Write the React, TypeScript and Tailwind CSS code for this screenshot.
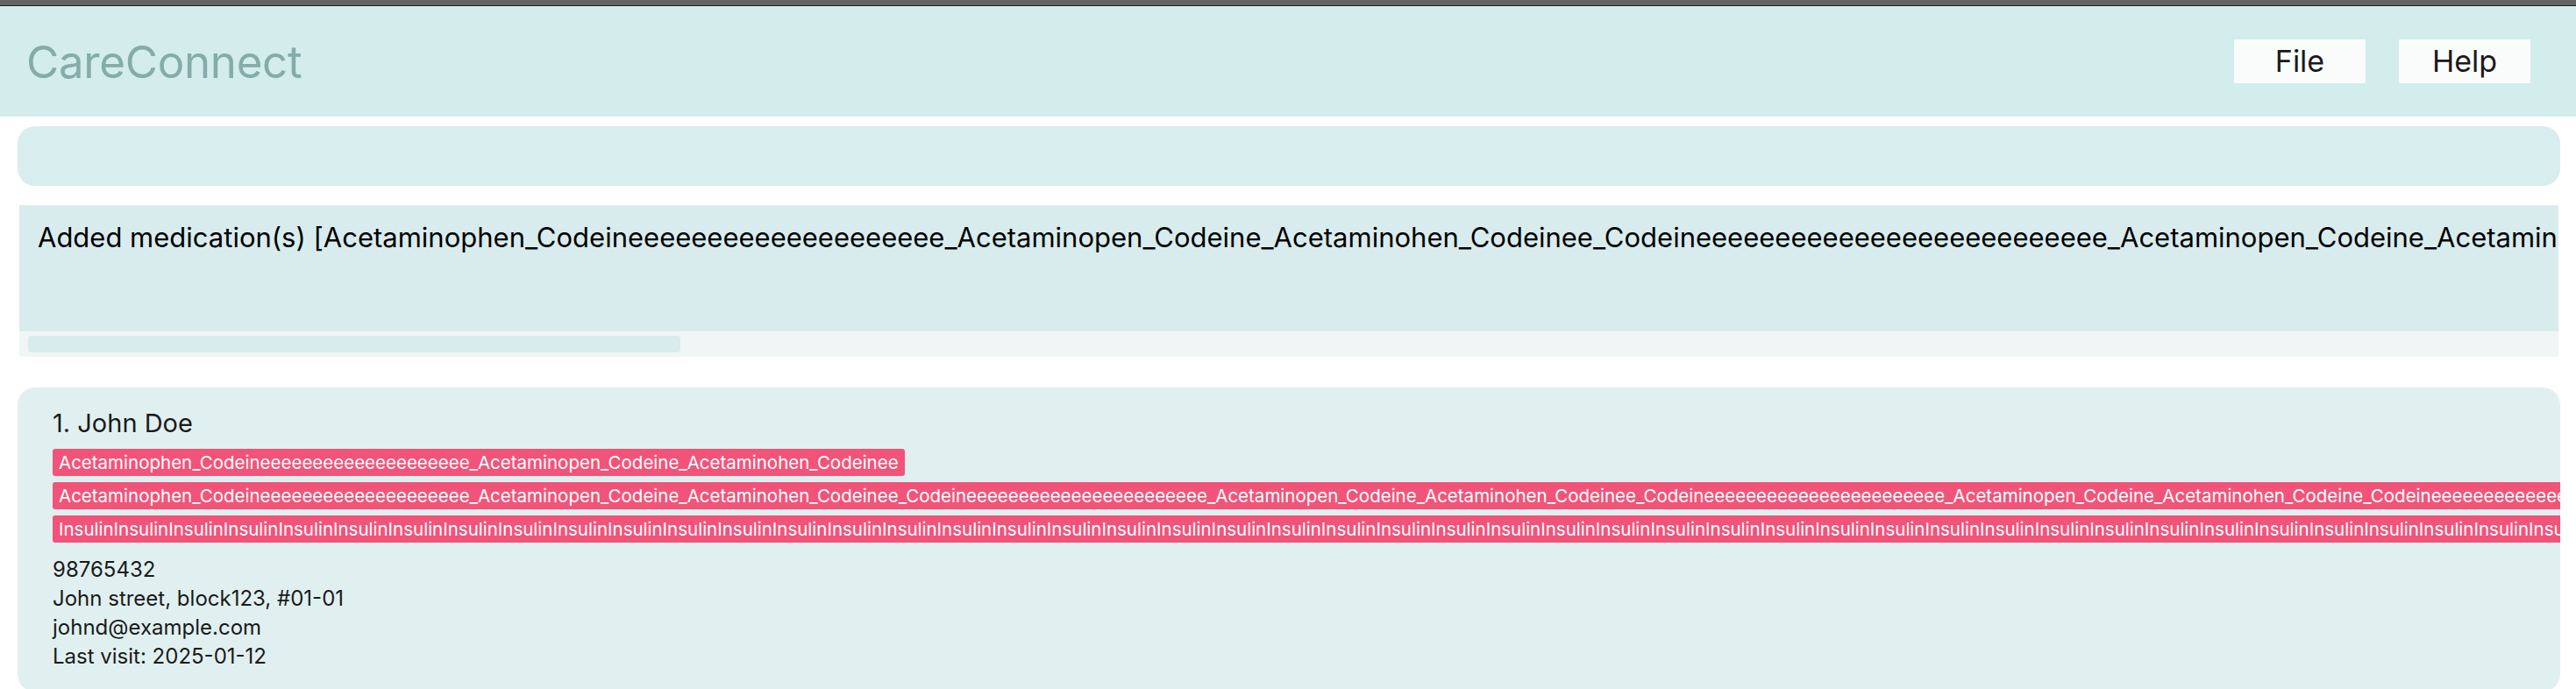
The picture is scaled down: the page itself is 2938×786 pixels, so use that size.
import React from 'react';

const FIRST = `Acetaminophen_Codeine${'e'.repeat(19)}_Acetaminopen_Codeine_Acetaminohen_Codeinee`;

function nextSeg(count: number): string {
  return `_Codeine${'e'.repeat(count)}_Acetaminopen_Codeine_Acetaminohen_Codeinee`;
}

const TAGS: string[] = [
  FIRST,
  `${FIRST}${nextSeg(22)}_Codeine${'e'.repeat(22)}_Acetaminopen_Codeine_Acetaminohen_Codeine_Codeine${'e'.repeat(25)}${nextSeg(22)}`,
  'Insulin'.repeat(120),
];

const RESULT = `Added medication(s) [${FIRST}${nextSeg(25)}${nextSeg(25)}${nextSeg(25)}]`;

function Header() {
  return (
    <div className="flex h-[126px] items-center justify-between bg-[#d3ecec] pl-[30px] pr-[52px]">
      <h1 className="text-[51px] leading-none tracking-[-0.3px] text-[#85abab]">CareConnect</h1>
      <div className="flex gap-[38px]">
        <button className="h-[50px] w-[150px] bg-[#fafcfc] text-[34px] leading-none text-[#1a1a1a]">File</button>
        <button className="h-[50px] w-[150px] bg-[#fafcfc] text-[34px] leading-none text-[#1a1a1a]">Help</button>
      </div>
    </div>
  );
}

function PersonCard() {
  return (
    <div className="ml-[20px] mr-[18px] mt-[35px] overflow-hidden rounded-[20px] bg-[#e0f0f0] pb-[24px] pl-[40px] pt-[24px]">
      <div className="text-[29px] leading-[34px] text-[#1a1a1a]">1. John Doe</div>
      <div className="mt-[12px] flex flex-col items-start gap-[7px]">
        {TAGS.map((tag, i) => (
          <span
            key={i}
            className="h-[31px] whitespace-nowrap rounded-[3px] bg-[#f25479] px-[7px] text-[20.5px] leading-[31px] text-white"
          >
            {tag}
          </span>
        ))}
      </div>
      <div className="mt-[14px] text-[24px] leading-[33px] text-[#1a1a1a]">
        <div>98765432</div>
        <div>John street, block123, #01-01</div>
        <div>johnd@example.com</div>
        <div>Last visit: 2025-01-12</div>
      </div>
    </div>
  );
}

export default function App() {
  return (
    <div className="min-h-screen bg-white font-['Inter',sans-serif]">
      <div className="h-[7px] border-b border-[#1e1e1e] bg-[#646464]" />
      <Header />
      <div className="ml-[20px] mr-[18px] mt-[11px] h-[68px] rounded-[20px] bg-[#d8edee]" />
      <div className="ml-[22px] mr-[20px] mt-[22px] overflow-hidden rounded-b-[4px]">
        <div className="h-[144px] overflow-hidden bg-[#d8ecee] pl-[21px] pt-[17px]">
          <p className="whitespace-nowrap text-[31px] leading-[40px] text-black">{RESULT}</p>
        </div>
        <div className="flex h-[29px] items-center bg-[#f0f6f6] px-[10px]">
          <div className="h-[19px] w-[744px] rounded-[4px] bg-[#d8ecee]" />
        </div>
      </div>
      <PersonCard />
    </div>
  );
}
